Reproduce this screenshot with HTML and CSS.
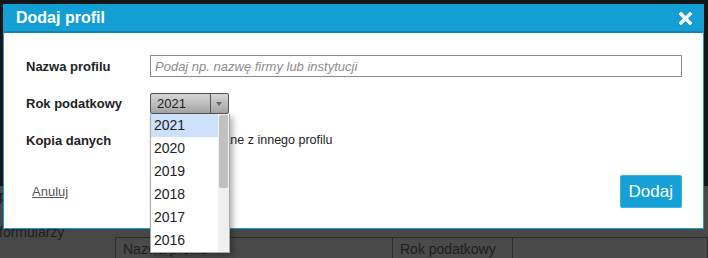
FILE: index.html
```html
<!DOCTYPE html>
<html lang="pl">
<head>
  <meta charset="UTF-8" />
  <title>Dodaj profil</title>
  <link rel="stylesheet" href="styles.css">
</head>
<body>
  <div class="page">
    <div class="topbar"></div>
    <div class="content">
      <ul class="sidebar">
        <li>profile</li>
        <li>formularzy</li>
      </ul>
      <div class="main">
        <table class="profiles">
          <tr>
            <th class="col-name">Nazwa profilu</th>
            <th class="col-year">Rok podatkowy</th>
            <th></th>
          </tr>
        </table>
      </div>
    </div>
  </div>

  <div class="modal">
    <div class="modal-header">
      <h2>Dodaj profil</h2>
      <span class="close">
        <svg width="13" height="13" viewBox="0 0 13 13">
          <path d="M2 2 L11 11 M11 2 L2 11" stroke="#fff" stroke-width="3.4" stroke-linecap="square"/>
        </svg>
      </span>
    </div>
    <div class="modal-body">
      <form class="profile-form">
        <label class="field-label">Nazwa profilu</label>
        <input type="text" class="text-input" placeholder="Podaj np. nazwę firmy lub instytucji" />

        <label class="field-label">Rok podatkowy</label>
        <div class="select-wrap">
          <div class="select">
            <span class="select-value">2021</span>
            <span class="select-arrow"></span>
          </div>
          <div class="year-list">
            <ul>
              <li class="active">2021</li>
              <li>2020</li>
              <li>2019</li>
              <li>2018</li>
              <li>2017</li>
              <li>2016</li>
            </ul>
            <div class="scrollbar"><div class="thumb"></div></div>
          </div>
        </div>

        <label class="field-label">Kopia danych</label>
        <label class="copy-option">
          <input type="checkbox" />
          Skopiuj dane z innego profilu
        </label>
      </form>
      <div class="modal-footer">
        <a href="#" class="cancel">Anuluj</a>
        <button type="button" class="add-btn">Dodaj</button>
      </div>
    </div>
  </div>
</body>
</html>
```

FILE: styles.css
```css
body {
  margin: 0;
  width: 708px;
  height: 258px;
  overflow: hidden;
  background-color: #474747;
  font-family: 'Liberation Sans', Arial, sans-serif;
  color: #222;
}

/* page under the overlay */
.topbar {
  height: 186px;
  background-color: #111618;
}
.content {
  display: flex;
}
.sidebar {
  list-style: none;
  margin: 0 0 0 -1px;
  padding: 1px 0 0;
  width: 116px;
  font-size: 14px;
  line-height: 18px;
  color: #1e1e1e;
}
.sidebar li {
  margin-bottom: 18px;
}
.main {
  flex: 1;
  padding-top: 51px;
}
.profiles {
  width: 100%;
  border-collapse: collapse;
  font-size: 14px;
}
.profiles th {
  text-align: left;
  font-weight: normal;
  color: #1e1e1e;
  border: 1px solid #2c2c2c;
  padding: 3px 7px;
  background-color: #4a4a4a;
}
.col-name {
  width: 262px;
}
.col-year {
  width: 105px;
}

/* modal */
.modal {
  position: absolute;
  left: 3px;
  top: 4px;
  width: 699px;
  border: 1px solid #149fd4;
  background-color: #fff;
}
.modal-header {
  height: 26px;
  background-color: #149fd4;
  border-bottom: 2px solid #0f86b6;
  display: flex;
  justify-content: space-between;
  align-items: center;
  padding: 0 11px 0 12px;
}
.modal-header h2 {
  margin: 0;
  font-size: 16px;
  line-height: 26px;
  color: #fff;
}
.close {
  display: flex;
  margin-top: 1px;
}
.modal-body {
  padding: 22px 21px 20px 22px;
}
.profile-form {
  display: grid;
  grid-template-columns: 124px 1fr;
  grid-auto-rows: 22px;
  row-gap: 15px;
  align-items: center;
}
.field-label {
  font-size: 13px;
  font-weight: bold;
  color: #222;
}
.text-input {
  box-sizing: border-box;
  height: 22px;
  margin: 0;
  border: 1px solid #8a8a8a;
  padding: 0 4px;
  font-family: inherit;
  font-size: 13px;
}
.text-input::placeholder {
  color: #8c8c8c;
  font-style: italic;
}

.select-wrap {
  position: relative;
  width: 79px;
  height: 21px;
}
.select {
  box-sizing: border-box;
  display: flex;
  height: 21px;
  border: 1px solid #555;
  border-radius: 2px;
  background: linear-gradient(#d6d6d6, #a4a4a4);
  font-size: 13px;
}
.select-value {
  flex: 1;
  padding-left: 6px;
  line-height: 19px;
  border-right: 1px solid #555;
}
.select-arrow {
  width: 17px;
  position: relative;
}
.select-arrow::after {
  content: '';
  position: absolute;
  left: 5px;
  top: 8px;
  border-left: 3.5px solid transparent;
  border-right: 3.5px solid transparent;
  border-top: 4px solid #666;
}

.year-list {
  position: absolute;
  left: 0;
  top: 100%;
  box-sizing: border-box;
  width: 80px;
  height: 139px;
  border: 1px solid #a9a9a9;
  border-top: none;
  background-color: #fff;
  box-shadow: 3px 3px 6px rgba(0, 0, 0, 0.3);
  display: flex;
  overflow: hidden;
}
.year-list ul {
  list-style: none;
  margin: 0;
  padding: 0;
  flex: 1;
  font-size: 14px;
}
.year-list li {
  height: 23px;
  line-height: 23px;
  padding-left: 3px;
  color: #222;
}
.year-list li.active {
  background-color: #cde1fb;
}
.scrollbar {
  width: 11px;
  background-color: #f0f0f0;
  padding-top: 1px;
}
.thumb {
  height: 73px;
  margin: 0 1px;
  border-radius: 2px;
  background-color: #c1c1c1;
}

.copy-option {
  display: flex;
  align-items: center;
  font-size: 12.5px;
  color: #222;
}
.copy-option input {
  margin: 0 8px 0 1px;
}

.modal-footer {
  display: flex;
  justify-content: space-between;
  align-items: center;
  margin-top: 24px;
  padding-left: 6px;
}
.cancel {
  color: #555;
  font-size: 13px;
}
.add-btn {
  height: 33px;
  padding: 0 8px;
  border: 1px solid #39b0de;
  border-radius: 2px;
  background-color: #15a1d5;
  color: #fff;
  font-family: inherit;
  font-size: 17px;
}
```
